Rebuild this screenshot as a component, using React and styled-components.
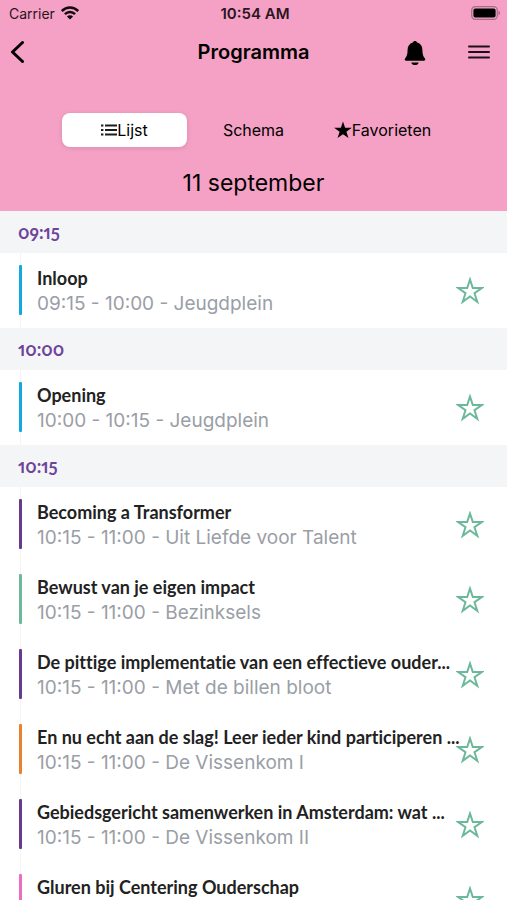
import { useState } from "react";
import styled, { createGlobalStyle } from "styled-components";

const sections = [
  {
    time: "09:15",
    sessions: [
      { id: 1, title: "Inloop", info: "09:15 - 10:00 - Jeugdplein", color: "#12a8e0" },
    ],
  },
  {
    time: "10:00",
    sessions: [
      { id: 2, title: "Opening", info: "10:00 - 10:15 - Jeugdplein", color: "#12a8e0" },
    ],
  },
  {
    time: "10:15",
    sessions: [
      {
        id: 3,
        title: "Becoming a Transformer",
        info: "10:15 - 11:00 - Uit Liefde voor Talent",
        color: "#663a8c",
      },
      {
        id: 4,
        title: "Bewust van je eigen impact",
        info: "10:15 - 11:00 - Bezinksels",
        color: "#6cb89b",
      },
      {
        id: 5,
        title: "De pittige implementatie van een effectieve ouder...",
        info: "10:15 - 11:00 - Met de billen bloot",
        color: "#663a8c",
      },
      {
        id: 6,
        title: "En nu echt aan de slag! Leer ieder kind participeren ...",
        info: "10:15 - 11:00 - De Vissenkom I",
        color: "#e8822e",
      },
      {
        id: 7,
        title: "Gebiedsgericht samenwerken in Amsterdam: wat ...",
        info: "10:15 - 11:00 - De Vissenkom II",
        color: "#663a8c",
      },
      {
        id: 8,
        title: "Gluren bij Centering Ouderschap",
        info: "",
        color: "#ec6cc0",
      },
    ],
  },
];

const STAR = "M14 2.5 16.8 11H25.8L18.5 16.2 21.3 24.8 14 19.5 6.7 24.8 9.5 16.2 2.2 11H11.2Z";

const WifiIcon = () => (
  <svg width="18" height="14" viewBox="0 0 18 14" fill="none" aria-hidden="true">
    <path d="M.8 5C5.4 .3 12.6 .3 17.2 5" stroke="#120a0e" strokeWidth="2.6" />
    <path d="M3.9 8.2C6.8 5.3 11.2 5.3 14.1 8.2" stroke="#120a0e" strokeWidth="2.4" />
    <path d="M9 13.6 5.9 10.4C7.6 8.9 10.4 8.9 12.1 10.4Z" fill="#120a0e" />
  </svg>
);

const BatteryIcon = () => (
  <svg width="30" height="14" viewBox="0 0 30 14" aria-hidden="true">
    <rect x=".7" y=".7" width="25.6" height="12.6" rx="3.6" fill="none" stroke="#a56d88" strokeWidth="1.2" />
    <rect x="2.4" y="2.4" width="22.2" height="9.2" rx="2" fill="#000" />
    <path d="M27.5 4.8C29.6 5.5 29.6 8.5 27.5 9.2Z" fill="#a56d88" />
  </svg>
);

const BackIcon = () => (
  <svg width="14" height="24" viewBox="0 0 14 24" fill="none" aria-hidden="true">
    <path d="M12.5 2.5 2.5 12 12.5 21.5" stroke="#000" strokeWidth="3" strokeLinecap="round" strokeLinejoin="round" />
  </svg>
);

const BellIcon = () => (
  <svg width="22" height="28" viewBox="0 -3 22 28" aria-hidden="true">
    <path d="M11 0C12 0 12.9 .6 13.2 1.5 16.6 2.4 18.4 5.2 18.4 8.8 18.4 13.4 19.2 15.4 20.8 17.2 21.8 18.4 21.2 19.8 19.8 19.8H2.2C.8 19.8 .2 18.4 1.2 17.2 2.8 15.4 3.6 13.4 3.6 8.8 3.6 5.2 5.4 2.4 8.8 1.5 9.1 .6 10 0 11 0Z" />
    <path d="M7.3 21.4H14.7C14.2 23.2 12.8 24 11 24S7.8 23.2 7.3 21.4Z" />
  </svg>
);

const MenuIcon = () => (
  <svg width="24" height="16" viewBox="0 0 24 16" aria-hidden="true">
    <path d="M2 2.5H22M2 8H22M2 13.5H22" stroke="#1c1016" strokeWidth="2" strokeLinecap="round" />
  </svg>
);

const ListIcon = () => (
  <svg width="16" height="12" viewBox="0 0 16 12" aria-hidden="true">
    <path d="M0 1.5H2.4M0 6H2.4M0 10.5H2.4M4 1.5H16M4 6H16M4 10.5H16" stroke="#1c1c1e" strokeWidth="1.8" />
  </svg>
);

const App = () => {
  const [activeTab, setActiveTab] = useState("lijst");
  const [favorites, setFavorites] = useState([]);

  const toggleFavorite = (id) => {
    setFavorites(
      favorites.includes(id) ? favorites.filter((item) => item !== id) : [...favorites, id]
    );
  };

  return (
    <>
      <GlobalStyle />
      <Screen>
        <Header>
          <StatusBar>
            <Carrier>
              Carrier <WifiIcon />
            </Carrier>
            <Clock>10:54 AM</Clock>
            <Battery>
              <BatteryIcon />
            </Battery>
          </StatusBar>
          <NavBar>
            <IconButton type="button" aria-label="Terug">
              <BackIcon />
            </IconButton>
            <PageTitle>Programma</PageTitle>
            <Actions>
              <IconButton type="button" aria-label="Meldingen">
                <BellIcon />
              </IconButton>
              <IconButton type="button" aria-label="Menu">
                <MenuIcon />
              </IconButton>
            </Actions>
          </NavBar>
          <Tabs>
            <Tab type="button" $active={activeTab === "lijst"} onClick={() => setActiveTab("lijst")}>
              <ListIcon />
              Lijst
            </Tab>
            <Tab type="button" $active={activeTab === "schema"} onClick={() => setActiveTab("schema")}>
              Schema
            </Tab>
            <Tab
              type="button"
              $active={activeTab === "favorieten"}
              onClick={() => setActiveTab("favorieten")}
            >
              <svg width="18" height="18" viewBox="2 2 24 24" aria-hidden="true">
                <path d={STAR} />
              </svg>
              Favorieten
            </Tab>
          </Tabs>
          <DateTitle>11 september</DateTitle>
        </Header>
        <Programme>
          {sections.map((section) => (
            <section key={section.time}>
              <SectionTime>{section.time}</SectionTime>
              <SessionList>
                {section.sessions.map((session) => (
                  <Session key={session.id}>
                    <Rail>
                      <Bar $color={session.color} />
                    </Rail>
                    <SessionText>
                      <SessionTitle>{session.title}</SessionTitle>
                      <SessionInfo>{session.info}</SessionInfo>
                    </SessionText>
                    <StarButton
                      type="button"
                      aria-label="Favoriet"
                      aria-pressed={favorites.includes(session.id)}
                      $checked={favorites.includes(session.id)}
                      onClick={() => toggleFavorite(session.id)}
                    >
                      <svg width="28" height="28" viewBox="0 0 28 28" aria-hidden="true">
                        <path d={STAR} />
                      </svg>
                    </StarButton>
                  </Session>
                ))}
              </SessionList>
            </section>
          ))}
        </Programme>
      </Screen>
    </>
  );
};

const GlobalStyle = createGlobalStyle`
  * {
    box-sizing: border-box;
  }
  body {
    margin: 0;
    background: #fff;
    color: #000;
    font-family: Inter, "Liberation Sans", sans-serif;
  }
  button {
    font: inherit;
    color: inherit;
    background: none;
    border: 0;
    padding: 0;
    cursor: pointer;
  }
  svg {
    display: block;
    flex-shrink: 0;
  }
`;

const Screen = styled.div`
  display: flex;
  flex-direction: column;
  height: 100vh;
`;

const Header = styled.header`
  flex-shrink: 0;
  background: #f4a1c5;
  padding-bottom: 12px;
`;

const StatusBar = styled.div`
  display: grid;
  grid-template-columns: 1fr auto 1fr;
  align-items: center;
  height: 26px;
  padding: 0 6px 0 9px;
  font-size: 14px;
  color: #2a1520;
`;

const Carrier = styled.span`
  display: flex;
  align-items: center;
  gap: 6px;
`;

const Clock = styled.span`
  font-size: 15px;
  font-weight: 600;
`;

const Battery = styled.span`
  justify-self: end;
`;

const NavBar = styled.div`
  display: grid;
  grid-template-columns: 1fr auto 1fr;
  align-items: center;
  height: 52px;
  padding: 0 10px;
`;

const IconButton = styled.button`
  justify-self: start;
`;

const PageTitle = styled.h1`
  margin: 0;
  font-size: 20px;
  font-weight: 600;
`;

const Actions = styled.div`
  display: flex;
  align-items: center;
  justify-self: end;
  gap: 41px;
  padding-right: 6px;
`;

const Tabs = styled.div`
  display: grid;
  grid-template-columns: repeat(3, 1fr);
  margin: 35px 60px 0;
`;

const Tab = styled.button`
  display: flex;
  align-items: center;
  justify-content: center;
  height: 34px;
  margin: 0 2px;
  border-radius: 8px;
  font-size: 16px;
  background: ${({ $active }) => ($active ? "#fff" : "transparent")};
  box-shadow: ${({ $active }) => ($active ? "0 1px 5px rgba(0, 0, 0, 0.12)" : "none")};
`;

const DateTitle = styled.h2`
  margin: 20px 0 0;
  font-size: 23px;
  font-weight: 400;
  line-height: 32px;
  text-align: center;
`;

const Programme = styled.main`
  flex: 1;
  min-height: 0;
  overflow-y: auto;
  scrollbar-width: none;
`;

const SectionTime = styled.h3`
  margin: 0;
  padding: 0 18px;
  background: #f3f5f7;
  color: #70439a;
  font-family: Lato, sans-serif;
  font-size: 18px;
  font-weight: 700;
  font-variant-numeric: oldstyle-nums proportional-nums;
  line-height: 42px;
`;

const SessionList = styled.ul`
  margin: 0;
  padding: 0;
  list-style: none;
`;

const Session = styled.li`
  display: flex;
  align-items: center;
  height: 75px;
  padding: 0 23px 0 19px;
`;

const Rail = styled.div`
  align-self: stretch;
  width: 3px;
  padding: 12px 0 13px;
  background: linear-gradient(#f4f4f6, #f4f4f6) center / 1px 100% no-repeat;
`;

const Bar = styled.div`
  height: 100%;
  border-radius: 1px;
  background: ${({ $color }) => $color};
`;

const SessionText = styled.div`
  flex: 1;
  min-width: 0;
  min-height: 50px;
  margin-left: 15px;
  white-space: nowrap;
`;

const SessionTitle = styled.h4`
  margin: 0;
  color: #222;
  font-family: Lato, sans-serif;
  font-size: 18px;
  font-weight: 700;
  font-variant-ligatures: none;
  line-height: 25px;
`;

const SessionInfo = styled.p`
  margin: 0;
  color: #9a9ea6;
  font-size: 19px;
  line-height: 25px;
`;

const StarButton = styled.button`
  svg {
    fill: ${({ $checked }) => ($checked ? "#6cb89b" : "none")};
    stroke: #6cb89b;
    stroke-width: 2;
  }
`;

export default App;
